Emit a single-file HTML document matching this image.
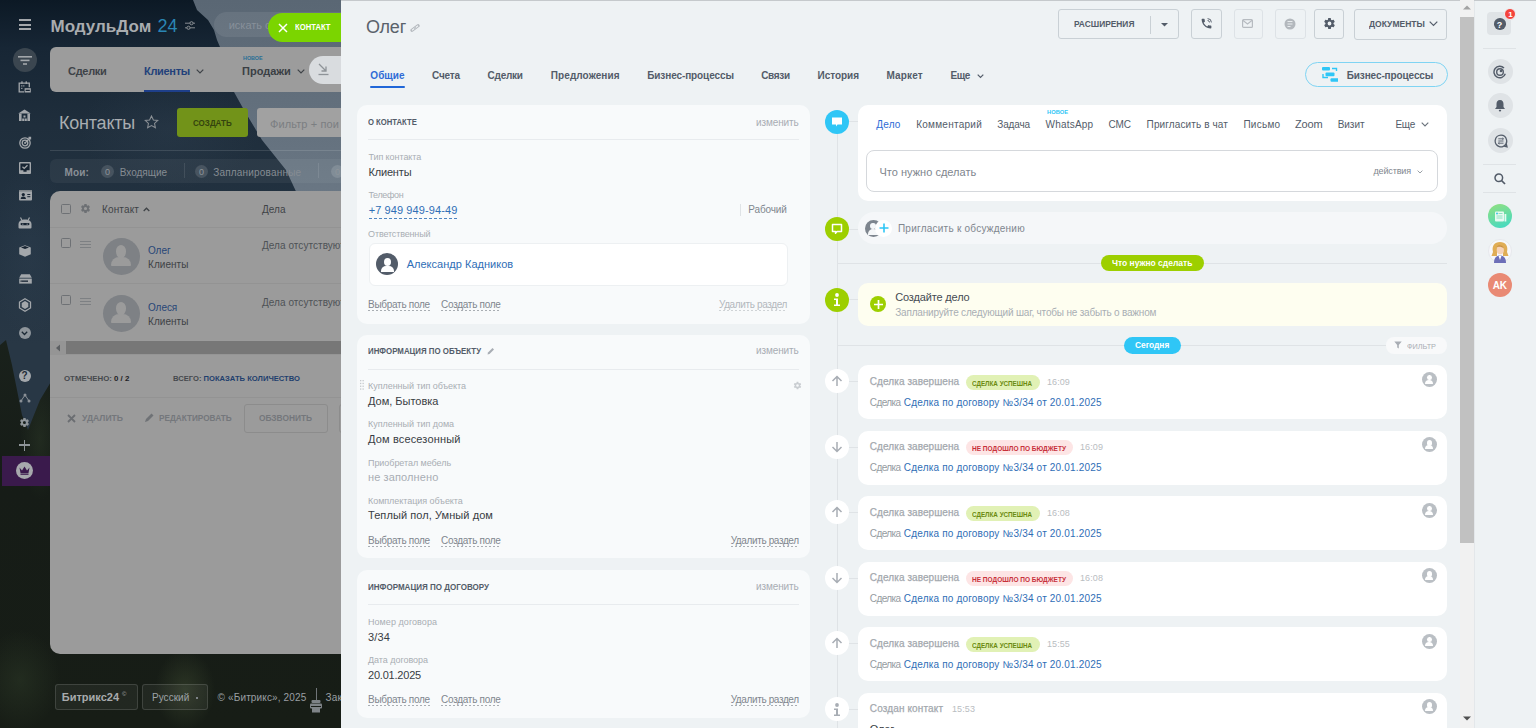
<!DOCTYPE html>
<html><head><meta charset="utf-8">
<style>
*{box-sizing:border-box}
html,body{margin:0;padding:0}
body{width:1536px;height:728px;overflow:hidden;position:relative;font-family:"Liberation Sans",sans-serif;background:#0d1b27}
.a{position:absolute}
.t{position:absolute;white-space:nowrap;line-height:1}
svg{display:block}
#bg{left:0;top:0;width:341px;height:728px;overflow:hidden;background:#0f1d29}
#sky{left:0;top:0;width:341px;height:200px;background:linear-gradient(180deg,#5a6774,#6a7784);clip-path:polygon(193px 0,341px 0,341px 200px,300px 200px,286px 170px,270px 150px,262px 140px,244px 110px,234px 92px,220px 47px,217px 40px,214px 30px,208px 20px,197px 10px)}
#mtn{left:0;top:0;width:341px;height:480px;background:radial-gradient(ellipse 90px 60px at 170px 130px,rgba(80,100,120,0.12),rgba(0,0,0,0)),radial-gradient(ellipse 40px 90px at 30px 250px,rgba(80,100,120,0.1),rgba(0,0,0,0)),linear-gradient(180deg,#0c1925 0%,#172635 10%,#1f2e3c 26%,#233342 50%,#283745 72%,#283745 100%)}
#forest{left:0;top:320px;width:341px;height:408px;background:radial-gradient(ellipse 30px 40px at 185px 370px,rgba(60,72,48,0.55),rgba(0,0,0,0)),radial-gradient(ellipse 40px 50px at 20px 360px,rgba(45,58,40,0.5),rgba(0,0,0,0)),radial-gradient(ellipse 20px 60px at 40px 120px,rgba(45,58,40,0.45),rgba(0,0,0,0)),linear-gradient(180deg,#1a221c 0%,#161c17 40%,#171d16 100%);clip-path:polygon(0 25px,6px 20px,12px 45px,17px 70px,22px 95px,28px 110px,34px 95px,40px 80px,46px 70px,52px 60px,341px 60px,341px 408px,0 408px)}
.dl{border-bottom:1px dashed #b9bdc2}
</style></head><body>
<div id="bg" class="a">
  <div id="mtn" class="a"></div>
  <div id="sky" class="a"></div>
  <div id="forest" class="a"></div>
</div>

<!-- LEFT SIDEBAR -->
<div class="a" style="left:0;top:0;width:50px;height:728px">
  <!-- hamburger -->
  <div class="a" style="left:19px;top:19px;width:12px;height:2px;background:#a3a7ab"></div>
  <div class="a" style="left:19px;top:23.5px;width:12px;height:2px;background:#a3a7ab"></div>
  <div class="a" style="left:19px;top:28px;width:12px;height:2px;background:#a3a7ab"></div>
  <!-- filter circle -->
  <div class="a" style="left:13px;top:48px;width:24px;height:24px;border-radius:50%;background:#3b4650"></div>
  <svg class="a" style="left:18px;top:56px" width="14" height="10" viewBox="0 0 14 10"><rect x="0" y="0" width="14" height="1.6" fill="#a3a7ab"/><rect x="2.5" y="3.6" width="9" height="1.6" fill="#a3a7ab"/><rect x="5" y="7.2" width="4" height="1.6" fill="#a3a7ab"/></svg>
  <!-- calendar -->
  <svg class="a" style="left:18px;top:81px" width="13" height="12" viewBox="0 0 13 12"><path d="M6 10.9H1.2V2.1H11.3V6.3" fill="none" stroke="#a3a7ab" stroke-width="1.3"/><rect x="3.3" y="0.3" width="1.3" height="2.6" fill="#a3a7ab"/><rect x="7.6" y="0.3" width="1.3" height="2.6" fill="#a3a7ab"/><rect x="3.2" y="4.3" width="1.2" height="1.2" fill="#a3a7ab"/><rect x="3.2" y="6.8" width="1.2" height="1.2" fill="#a3a7ab"/><rect x="5.2" y="4.3" width="1.2" height="1.2" fill="#a3a7ab"/><rect x="6.6" y="7.2" width="6.2" height="4.3" fill="#a3a7ab"/><rect x="7.6" y="8.7" width="4.2" height="1.3" fill="#172432"/></svg>
  <!-- house -->
  <svg class="a" style="left:18px;top:108.5px" width="13" height="12" viewBox="0 0 13 12"><path d="M0.2 4.6L6.5 0.6L12.8 4.6Z" fill="#a3a7ab"/><rect x="1" y="4.5" width="2.6" height="7.5" fill="#a3a7ab"/><rect x="9.4" y="4.5" width="2.6" height="7.5" fill="#a3a7ab"/><rect x="5.5" y="6.5" width="2" height="2" fill="#a3a7ab"/><rect x="4.2" y="9.5" width="2.1" height="2.5" fill="#a3a7ab"/><rect x="6.7" y="9.5" width="2.1" height="2.5" fill="#a3a7ab"/></svg>
  <!-- target -->
  <svg class="a" style="left:18.5px;top:136px" width="13" height="13" viewBox="0 0 13 13"><circle cx="6" cy="7" r="5.2" fill="none" stroke="#a3a7ab" stroke-width="1.3"/><circle cx="6" cy="7" r="2.8" fill="none" stroke="#a3a7ab" stroke-width="1.3"/><circle cx="6" cy="7" r="0.9" fill="#a3a7ab"/><path d="M6 7L11.5 1.5M9.5 1.5h2v2" stroke="#a3a7ab" stroke-width="1.3" fill="none"/></svg>
  <!-- checkbox -->
  <svg class="a" style="left:19px;top:162px" width="12" height="12" viewBox="0 0 12 12"><rect x="0" y="0" width="12" height="12" rx="1" fill="#a3a7ab"/><path d="M1.4 1.4H10.6V8.3H7.6V9.8H4.4V8.3H1.4Z" fill="#172432"/><path d="M3.5 4.8L5.2 6.4L8.5 3.2" stroke="#a3a7ab" stroke-width="1.3" fill="none"/></svg>
  <!-- contact card -->
  <svg class="a" style="left:18.5px;top:190px" width="13" height="11" viewBox="0 0 13 11"><rect x="0" y="0" width="13" height="10.5" rx="1" fill="#a3a7ab"/><rect x="0" y="0" width="13" height="1.6" fill="#7d8388"/><circle cx="4.3" cy="4.6" r="1.6" fill="#172432"/><path d="M1.6 9c0.2-1.9 1.3-2.6 2.7-2.6s2.5 0.7 2.7 2.6z" fill="#172432"/><rect x="8.3" y="4" width="3" height="1" fill="#172432"/><rect x="8.3" y="6.2" width="3" height="1" fill="#172432"/></svg>
  <!-- robot -->
  <svg class="a" style="left:18px;top:216.5px" width="14" height="12" viewBox="0 0 14 12"><path d="M2.5 0.5L3.8 3M11.5 0.5L10.2 3" stroke="#a3a7ab" stroke-width="1.2"/><path d="M0.5 7.5C0.5 4 3 2.5 7 2.5S13.5 4 13.5 7.5V10.5Q13.5 11.5 12.5 11.5H1.5Q0.5 11.5 0.5 10.5Z" fill="#a3a7ab"/><rect x="2.5" y="6" width="9" height="2.2" rx="1.1" fill="#172432"/><rect x="4.2" y="6.7" width="1.2" height="0.9" fill="#a3a7ab"/><rect x="8.6" y="6.7" width="1.2" height="0.9" fill="#a3a7ab"/></svg>
  <!-- box -->
  <svg class="a" style="left:19px;top:245px" width="12" height="12" viewBox="0 0 12 12"><path d="M6 0.2L11.8 2.5V9.3L6 11.8L0.2 9.3V2.5Z" fill="#a3a7ab"/><path d="M2 2.4L6 1L10 2.4L6 3.9Z" fill="#172432"/></svg>
  <!-- drawer -->
  <svg class="a" style="left:18.5px;top:273.5px" width="13" height="10" viewBox="0 0 13 10"><path d="M2.2 0.3H10.8L12.8 3.8H0.2Z" fill="#a3a7ab"/><rect x="0.2" y="4.6" width="12.6" height="5" fill="#a3a7ab"/><rect x="2.5" y="6.5" width="6.5" height="1.3" fill="#172432"/><rect x="1.5" y="6.5" width="1" height="1.3" fill="#172432"/></svg>
  <!-- hexagon -->
  <svg class="a" style="left:18px;top:298px" width="14" height="14" viewBox="0 0 14 14"><path d="M7 0.8L12.5 4V10L7 13.2L1.5 10V4Z" fill="none" stroke="#a3a7ab" stroke-width="1.3"/><path d="M7 3L10.3 5V9L7 11L3.7 9V5Z" fill="#a3a7ab"/></svg>
  <!-- chevron circle -->
  <div class="a" style="left:18.5px;top:327px;width:12px;height:12px;border-radius:50%;background:#8e959b"></div>
  <svg class="a" style="left:21px;top:331px" width="7" height="5" viewBox="0 0 7 5"><path d="M0.8 0.8L3.5 3.5L6.2 0.8" stroke="#1a2834" stroke-width="1.3" fill="none"/></svg>
  <!-- help -->
  <div class="a" style="left:18.5px;top:369.5px;width:12px;height:12px;border-radius:50%;background:#a3a7ab"></div>
  <div class="t" style="left:21px;top:371px;width:7px;text-align:center;font-size:10px;font-weight:bold;color:#1e2b36">?</div>
  <!-- network -->
  <svg class="a" style="left:19px;top:393px" width="12" height="10" viewBox="0 0 12 10"><circle cx="6" cy="2" r="1.5" fill="#8a9096"/><circle cx="2" cy="8" r="1.5" fill="#8a9096"/><circle cx="10" cy="8" r="1.5" fill="#8a9096"/><path d="M6 2L2 8M6 2L10 8" stroke="#8a9096" stroke-width="1"/></svg>
  <!-- gear -->
  <svg class="a" style="left:19px;top:417px" width="11" height="11" viewBox="0 0 24 24"><path fill="#8f9599" d="M19.4 13c.04-.3.06-.66.06-1s-.02-.7-.07-1l2.1-1.65a.5.5 0 0 0 .12-.64l-2-3.46a.5.5 0 0 0-.6-.22l-2.5 1a7.3 7.3 0 0 0-1.7-1l-.38-2.65A.5.5 0 0 0 14 2h-4a.5.5 0 0 0-.5.42l-.37 2.65c-.6.25-1.17.6-1.7 1l-2.5-1a.5.5 0 0 0-.6.22l-2 3.46a.5.5 0 0 0 .12.64L4.57 11c-.04.3-.07.66-.07 1s.02.7.07 1l-2.1 1.65a.5.5 0 0 0-.12.64l2 3.46c.12.22.39.3.6.22l2.5-1c.52.4 1.1.74 1.7 1l.37 2.65c.04.24.25.42.5.42h4c.25 0 .46-.18.5-.42l.37-2.65c.6-.25 1.17-.6 1.7-1l2.5 1c.22.08.48 0 .6-.22l2-3.46a.5.5 0 0 0-.12-.64zM12 15.5A3.5 3.5 0 1 1 12 8.5a3.5 3.5 0 0 1 0 7z"/></svg>
  <!-- plus -->
  <div class="a" style="left:19px;top:444px;width:11px;height:1.6px;background:#8f9599"></div>
  <div class="a" style="left:23.7px;top:439.5px;width:1.6px;height:11px;background:#8f9599"></div>
  <!-- crown -->
  <div class="a" style="left:2px;top:456px;width:48px;height:30px;background:#3a1a4c"></div>
  <div class="a" style="left:15.5px;top:462px;width:17px;height:17px;border-radius:50%;background:#a7a9ad"></div>
  <svg class="a" style="left:18.5px;top:466px" width="11" height="9" viewBox="0 0 11 9"><path d="M0.5 1.5L3 4.5L5.5 0.5L8 4.5L10.5 1.5L9.5 7H1.5Z" fill="#3a1a4c"/><rect x="1.5" y="7.5" width="8" height="1.3" fill="#3a1a4c"/></svg>
</div>



<div class="t" style="left:50.5px;top:17.81px;font-size:17px;color:#a9acaf;font-weight:bold;">МодульДом</div>
<div class="t" style="left:157.5px;top:16.96px;font-size:18px;color:#2a86b4;letter-spacing:-0.111px;">24</div>
<svg class="a" style="left:185px;top:20.5px;" width="10" height="9" viewBox="0 0 10 9"><path d="M0 2.2h10M0 6.8h10" stroke="#878c91" stroke-width="1"/><circle cx="6.5" cy="2.2" r="1.6" fill="#1d2b37" stroke="#878c91" stroke-width="1"/><circle cx="3.5" cy="6.8" r="1.6" fill="#1d2b37" stroke="#878c91" stroke-width="1"/></svg>
<div class="a" style="left:214px;top:11.5px;width:140px;height:25px;border-radius:13px;background:rgba(255,255,255,0.08)"></div>
<div class="t" style="left:228.7px;top:19.99px;font-size:11px;color:#87909a;">искать с</div>
<div class="a" style="left:50px;top:47px;width:320px;height:45px;border-radius:6px;background:#9c9c9c"></div>
<div class="t" style="left:68px;top:66.49px;font-size:11px;color:#3e4348;font-weight:bold;letter-spacing:-0.305px;">Сделки</div>
<div class="t" style="left:144px;top:66.49px;font-size:11px;color:#22417a;font-weight:bold;letter-spacing:-0.312px;">Клиенты</div>
<svg class="a" style="left:196px;top:69px;" width="8" height="5" viewBox="0 0 8 5"><path d="M0.7 0.7L4 4L7.3 0.7" stroke="#3e4348" stroke-width="1.2" fill="none"/></svg>
<div class="a" style="left:144px;top:90px;width:46px;height:2px;background:#1e3f8a"></div>
<div class="t" style="left:242.8px;top:55.22px;font-size:6px;color:#2a6f96;font-weight:bold;"><span style="display:inline-block;transform:scale(0.9);transform-origin:0 100%">НОВОЕ</span></div>
<div class="t" style="left:242px;top:66.49px;font-size:11px;color:#3a3f44;font-weight:bold;">Продажи</div>
<svg class="a" style="left:297px;top:69px;" width="8" height="5" viewBox="0 0 8 5"><path d="M0.7 0.7L4 4L7.3 0.7" stroke="#3e4348" stroke-width="1.2" fill="none"/></svg>
<div class="a" style="left:309px;top:56px;width:60px;height:28px;border-radius:14px;background:#d9dcdf"></div>
<svg class="a" style="left:318px;top:63px;" width="11" height="13" viewBox="0 0 11 13"><path d="M1 1L8 8M8 3.5V8H3.5" stroke="#8e9398" stroke-width="1.3" fill="none"/><path d="M0.5 11.5h10" stroke="#8e9398" stroke-width="1.3"/></svg>
<div class="t" style="left:59px;top:113.86px;font-size:18px;color:#a9adb1;letter-spacing:-0.216px;">Контакты</div>
<svg class="a" style="left:143.5px;top:115px;" width="15" height="14" viewBox="0 0 24 23"><path d="M12 1.5l3.1 6.6 7.2.9-5.3 4.9 1.4 7.1L12 17.5l-6.4 3.5 1.4-7.1-5.3-4.9 7.2-.9z" fill="none" stroke="#8b9095" stroke-width="1.7"/></svg>
<div class="a" style="left:177px;top:107.5px;width:71px;height:29.5px;border-radius:3px;background:#729319"></div>
<div class="t" style="left:193px;top:119.48px;font-size:9px;color:#34430e;font-weight:bold;transform:scaleX(0.8922);transform-origin:0 0;">СОЗДАТЬ</div>
<div class="a" style="left:257px;top:107.5px;width:120px;height:29.5px;border-radius:3px;background:#a1a1a1"></div>
<div class="t" style="left:270px;top:118.79px;font-size:11px;color:#7b7e81;letter-spacing:0.103px;">Фильтр + пои</div>
<div class="a" style="left:50px;top:150px;width:300px;height:1px;background:rgba(255,255,255,0.12)"></div>
<div class="a" style="left:50px;top:158.8px;width:300px;height:24.2px;border-radius:6px 0 0 6px;background:rgba(255,255,255,0.05)"></div>
<div class="t" style="left:64.6px;top:167.64px;font-size:10px;color:#8a9097;font-weight:bold;letter-spacing:0.120px;">Мои:</div>
<div class="a" style="left:101px;top:164.5px;width:13px;height:13px;border-radius:50%;background:rgba(255,255,255,0.13)"></div>
<div class="t" style="left:101px;top:167.68px;font-size:9px;color:#8e959b;width:13px;text-align:center">0</div>
<div class="t" style="left:119.7px;top:167.64px;font-size:10px;color:#868c93;">Входящие</div>
<div class="a" style="left:184px;top:163px;width:1px;height:15px;background:rgba(255,255,255,0.1)"></div>
<div class="a" style="left:195px;top:164.5px;width:13px;height:13px;border-radius:50%;background:rgba(255,255,255,0.13)"></div>
<div class="t" style="left:195px;top:167.68px;font-size:9px;color:#8e959b;width:13px;text-align:center">0</div>
<div class="t" style="left:213.2px;top:167.64px;font-size:10px;color:#868c93;letter-spacing:0.199px;">Запланированные</div>
<div class="a" style="left:318px;top:163px;width:1px;height:15px;background:rgba(255,255,255,0.1)"></div>
<div class="a" style="left:331px;top:164.5px;width:13px;height:13px;border-radius:50%;background:rgba(255,255,255,0.13)"></div>
<div class="t" style="left:331px;top:167.68px;font-size:9px;color:#8e959b;width:13px;text-align:center">0</div>
<div class="a" style="left:50px;top:190.8px;width:320px;height:463.4px;border-radius:10px;background:#9b9b9b;overflow:hidden"><div class="a" style="left:0;top:36px;width:320px;height:1px;background:#939393"></div><div class="a" style="left:0;top:92px;width:320px;height:1px;background:#939393"></div><div class="a" style="left:0;top:206px;width:320px;height:1px;background:#939393"></div></div>
<div class="a" style="left:60.5px;top:203.5px;width:10.5px;height:10.5px;border:1px solid #6e7175;border-radius:1.5px"></div>
<svg class="a" style="left:79.5px;top:202.5px;" width="11" height="11" viewBox="0 0 24 24"><path fill="#6d7074" d="M19.4 13c.04-.3.06-.66.06-1s-.02-.7-.07-1l2.1-1.65a.5.5 0 0 0 .12-.64l-2-3.46a.5.5 0 0 0-.6-.22l-2.5 1a7.3 7.3 0 0 0-1.7-1l-.38-2.65A.5.5 0 0 0 14 2h-4a.5.5 0 0 0-.5.42l-.37 2.65c-.6.25-1.17.6-1.7 1l-2.5-1a.5.5 0 0 0-.6.22l-2 3.46a.5.5 0 0 0 .12.64L4.57 11c-.04.3-.07.66-.07 1s.02.7.07 1l-2.1 1.65a.5.5 0 0 0-.12.64l2 3.46c.12.22.39.3.6.22l2.5-1c.52.4 1.1.74 1.7 1l.37 2.65c.04.24.25.42.5.42h4c.25 0 .46-.18.5-.42l.37-2.65c.6-.25 1.17-.6 1.7-1l2.5 1c.22.08.48 0 .6-.22l2-3.46a.5.5 0 0 0-.12-.64zM12 15.5A3.5 3.5 0 1 1 12 8.5a3.5 3.5 0 0 1 0 7z"/></svg>
<div class="t" style="left:102px;top:204.94px;font-size:10px;color:#3f4347;letter-spacing:0.139px;">Контакт</div>
<svg class="a" style="left:143px;top:207px;" width="7" height="5" viewBox="0 0 7 5"><path d="M0.7 4L3.5 1.2L6.3 4" stroke="#3f4347" stroke-width="1.3" fill="none"/></svg>
<div class="t" style="left:262px;top:204.94px;font-size:10px;color:#3f4347;letter-spacing:0.047px;">Дела</div>
<div class="a" style="left:60.5px;top:237.5px;width:10.5px;height:10.5px;border:1px solid #6e7175;border-radius:1.5px"></div>
<div class="a" style="left:80px;top:241px;width:11px;height:1.2px;background:#7d8083;box-shadow:0 3px 0 #7d8083,0 6px 0 #7d8083"></div>
<div class="a" style="left:102.5px;top:237.5px;width:37.5px;height:37.5px;border-radius:50%;background:#7e8185;overflow:hidden"><div class="a" style="left:13.7px;top:7.5px;width:10px;height:12.5px;border-radius:50%;background:#9b9b9b"></div><div class="a" style="left:8.7px;top:19.3px;width:20px;height:9.3px;border-radius:9px 9px 1px 1px;background:#9b9b9b"></div></div>
<div class="t" style="left:148px;top:245.84px;font-size:10px;color:#274677;letter-spacing:-0.057px;">Олег</div>
<div class="t" style="left:148px;top:259.74px;font-size:10px;color:#3e4246;letter-spacing:0.057px;">Клиенты</div>
<div class="t" style="left:262px;top:241.03px;font-size:10px;color:#4e5256;letter-spacing:0.051px;">Дела отсутствуют</div>
<div class="a" style="left:60.5px;top:294.5px;width:10.5px;height:10.5px;border:1px solid #6e7175;border-radius:1.5px"></div>
<div class="a" style="left:80px;top:298px;width:11px;height:1.2px;background:#7d8083;box-shadow:0 3px 0 #7d8083,0 6px 0 #7d8083"></div>
<div class="a" style="left:102.5px;top:294.5px;width:37.5px;height:37.5px;border-radius:50%;background:#7e8185;overflow:hidden"><div class="a" style="left:13.7px;top:7.5px;width:10px;height:12.5px;border-radius:50%;background:#9b9b9b"></div><div class="a" style="left:8.7px;top:19.3px;width:20px;height:9.3px;border-radius:9px 9px 1px 1px;background:#9b9b9b"></div></div>
<div class="t" style="left:148px;top:302.84px;font-size:10px;color:#274677;letter-spacing:-0.059px;">Олеся</div>
<div class="t" style="left:148px;top:316.74px;font-size:10px;color:#3e4246;letter-spacing:0.057px;">Клиенты</div>
<div class="t" style="left:262px;top:298.04px;font-size:10px;color:#4e5256;letter-spacing:0.051px;">Дела отсутствуют</div>
<div class="a" style="left:50px;top:340.5px;width:291px;height:14px;background:#959595"></div>
<svg class="a" style="left:55px;top:343.5px;" width="6" height="8" viewBox="0 0 6 8"><path d="M5 0.5V7.5L1 4Z" fill="#5c5f62"/></svg>
<div class="a" style="left:66px;top:341px;width:275px;height:13px;background:#777777"></div>
<div class="t" style="left:64px;top:374.55px;font-size:7.86px;color:#45494d;font-weight:bold;">ОТМЕЧЕНО: <span style="color:#1f2225">0 / 2</span></div>
<div class="t" style="left:173px;top:374.76px;font-size:7.61px;color:#45494d;font-weight:bold;">ВСЕГО: <span style="color:#1f3f6e">ПОКАЗАТЬ КОЛИЧЕСТВО</span></div>
<svg class="a" style="left:67px;top:413.5px;" width="9" height="9" viewBox="0 0 9 9"><path d="M1 1L8 8M8 1L1 8" stroke="#6b6e72" stroke-width="1.8"/></svg>
<div class="t" style="left:82.4px;top:414.28px;font-size:9px;color:#74777b;font-weight:bold;transform:scaleX(0.9556);transform-origin:0 0;">УДАЛИТЬ</div>
<svg class="a" style="left:144px;top:412.5px;" width="10" height="10" viewBox="0 0 10 10"><path d="M1 9L2 6L7.5 0.5L9.5 2.5L4 8Z" fill="#6f7276"/></svg>
<div class="t" style="left:158.7px;top:414.28px;font-size:9px;color:#74777b;font-weight:bold;transform:scaleX(0.9122);transform-origin:0 0;">РЕДАКТИРОВАТЬ</div>
<div class="a" style="left:243.5px;top:403.5px;width:84px;height:29px;border:1px solid #8c8c8c;border-radius:3px"></div>
<div class="t" style="left:259px;top:414.28px;font-size:9px;color:#74777b;font-weight:bold;transform:scaleX(0.9267);transform-origin:0 0;">ОБЗВОНИТЬ</div>
<div class="a" style="left:338.5px;top:403.5px;width:20px;height:29px;border:1px solid #8c8c8c;border-radius:3px"></div>
<div class="a" style="left:54.5px;top:684px;width:83.5px;height:25.5px;border:1px solid rgba(255,255,255,0.13);border-radius:3px;background:rgba(255,255,255,0.05)"></div>
<div class="t" style="left:61.8px;top:692.49px;font-size:11px;color:#a8abad;font-weight:bold;letter-spacing:0.173px;letter-spacing:0">Битрикс24</div>
<div class="t" style="left:122px;top:690.72px;font-size:6px;color:#a8abad;">©</div>
<div class="a" style="left:142px;top:684px;width:65.5px;height:25.5px;border:1px solid rgba(255,255,255,0.13);border-radius:3px;background:rgba(255,255,255,0.05)"></div>
<div class="t" style="left:152px;top:693.33px;font-size:10px;color:#9ea3a7;letter-spacing:0.027px;">Русский</div>
<div class="a" style="left:196px;top:697px;width:1.5px;height:1.5px;background:#7e8387"></div>
<div class="t" style="left:217.6px;top:693.33px;font-size:10px;color:#9a9fa3;letter-spacing:0.137px;">© «Битрикс», 2025</div>
<div class="a" style="left:315.5px;top:688px;width:1px;height:12px;background:#6f7478"></div>
<svg class="a" style="left:310px;top:700px;" width="12" height="13" viewBox="0 0 12 13"><rect x="1.5" y="0" width="9" height="3" rx="1" fill="#7e8387"/><rect x="0" y="3.5" width="12" height="5" rx="1" fill="#7e8387"/><rect x="2" y="8" width="8" height="4.5" fill="#7e8387"/><rect x="1" y="6" width="10" height="1" fill="#1a1f1a"/></svg>
<div class="t" style="left:325.6px;top:693.33px;font-size:10px;color:#9a9fa3;letter-spacing:0.144px;">Зак</div>
<div class="a" style="left:268px;top:13px;width:80px;height:29px;border-radius:15px 0 0 15px;background:#7bd500"></div>
<svg class="a" style="left:278px;top:22.5px;" width="10" height="10" viewBox="0 0 10 10"><path d="M1 1L9 9M9 1L1 9" stroke="#fff" stroke-width="1.5"/></svg>
<div class="t" style="left:294.7px;top:23.08px;font-size:9px;color:#fff;font-weight:bold;transform:scaleX(0.8522);transform-origin:0 0;">КОНТАКТ</div>
<div class="a" style="left:341px;top:0px;width:1134px;height:728px;background:#eef2f4"></div>
<div class="a" style="left:341px;top:0px;width:1195px;height:1px;background:#c5c9cc"></div>
<div class="t" style="left:366px;top:17.86px;font-size:18px;color:#5a626b;letter-spacing:-0.227px;">Олег</div>
<svg class="a" style="left:409.5px;top:23.5px;" width="10" height="8" viewBox="0 0 10 8"><path d="M2 6.2L8 1.8" stroke="#b3b8bd" stroke-width="3.2" stroke-linecap="round"/><path d="M2.3 6L7.7 2" stroke="#eef2f4" stroke-width="1.2" stroke-linecap="round"/><path d="M4.3 4.6L5.7 3.4" stroke="#b3b8bd" stroke-width="1.2"/></svg>
<div class="t" style="left:370.3px;top:71.33px;font-size:10px;color:#2e6bd6;font-weight:bold;letter-spacing:0.061px;">Общие</div>
<div class="t" style="left:432px;top:71.33px;font-size:10px;color:#535c69;font-weight:bold;letter-spacing:-0.161px;">Счета</div>
<div class="t" style="left:487.6px;top:71.33px;font-size:10px;color:#535c69;font-weight:bold;letter-spacing:-0.256px;">Сделки</div>
<div class="t" style="left:550.8px;top:71.33px;font-size:10px;color:#535c69;font-weight:bold;letter-spacing:0.074px;">Предложения</div>
<div class="t" style="left:647.2px;top:71.33px;font-size:10px;color:#535c69;font-weight:bold;letter-spacing:-0.100px;">Бизнес-процессы</div>
<div class="t" style="left:761.2px;top:71.33px;font-size:10px;color:#535c69;font-weight:bold;letter-spacing:-0.302px;">Связи</div>
<div class="t" style="left:817.5px;top:71.33px;font-size:10px;color:#535c69;font-weight:bold;letter-spacing:-0.030px;">История</div>
<div class="t" style="left:886.4px;top:71.33px;font-size:10px;color:#535c69;font-weight:bold;letter-spacing:0.154px;">Маркет</div>
<div class="t" style="left:950.4px;top:71.33px;font-size:10px;color:#535c69;font-weight:bold;letter-spacing:-0.393px;">Еще</div>
<div class="a" style="left:370.3px;top:86.3px;width:34.4px;height:2px;background:#2067d8;border-radius:1px"></div>
<svg class="a" style="left:976.5px;top:73.5px;" width="7" height="5" viewBox="0 0 7 5"><path d="M0.7 0.7L3.5 3.5L6.3 0.7" stroke="#535c69" stroke-width="1.2" fill="none"/></svg>
<div class="a" style="left:1058px;top:9px;width:121px;height:30px;border:1px solid #c9d0d5;border-radius:3px"></div>
<div class="t" style="left:1074px;top:20.48px;font-size:9px;color:#535c69;font-weight:bold;transform:scaleX(0.9300);transform-origin:0 0;">РАСШИРЕНИЯ</div>
<div class="a" style="left:1149.5px;top:15.5px;width:1px;height:18px;background:#c9d0d5"></div>
<svg class="a" style="left:1160.5px;top:22.5px;" width="7" height="4" viewBox="0 0 7 4"><path d="M0 0H7L3.5 3.5Z" fill="#535c69"/></svg>
<div class="a" style="left:1191.3px;top:9px;width:30.3px;height:30px;border:1px solid #c9d0d5;border-radius:3px"></div>
<svg class="a" style="left:1200px;top:17px;" width="13" height="13" viewBox="0 0 24 24"><path fill="#535c69" d="M6.6 10.8c1.4 2.8 3.8 5.1 6.6 6.6l2.2-2.2c.3-.3.7-.4 1-.2 1.1.4 2.3.6 3.6.6.6 0 1 .4 1 1V20c0 .6-.4 1-1 1C10.6 21 3 13.4 3 4c0-.6.4-1 1-1h3.5c.6 0 1 .4 1 1 0 1.3.2 2.5.6 3.6.1.3 0 .7-.2 1z"/><path d="M14 3a7 7 0 0 1 7 7M14 6.5a3.5 3.5 0 0 1 3.5 3.5" stroke="#535c69" stroke-width="1.8" fill="none"/></svg>
<div class="a" style="left:1233.7px;top:9px;width:29.5px;height:30px;border:1px solid #dde2e6;border-radius:3px"></div>
<svg class="a" style="left:1242px;top:19px;" width="11" height="9" viewBox="0 0 11 9"><rect x="0.6" y="0.6" width="9.8" height="7.8" rx="1" fill="none" stroke="#b6bbc0" stroke-width="1.2"/><path d="M0.8 1.2L5.5 5L10.2 1.2" fill="none" stroke="#b6bbc0" stroke-width="1.1"/></svg>
<div class="a" style="left:1275.4px;top:9px;width:30.2px;height:30px;border:1px solid #dde2e6;border-radius:3px"></div>
<svg class="a" style="left:1284px;top:18px;" width="12" height="12" viewBox="0 0 12 12"><circle cx="6" cy="6" r="5.5" fill="#b3b8bd"/><path d="M3.5 3.5h5M3.5 6h5M3.5 8.5h3" stroke="#eef2f4" stroke-width="0.9"/></svg>
<div class="a" style="left:1314.3px;top:9px;width:29.5px;height:30px;border:1px solid #c9d0d5;border-radius:3px"></div>
<svg class="a" style="left:1322.5px;top:17px;" width="13" height="13" viewBox="0 0 24 24"><path fill="#535c69" d="M19.4 13c.04-.3.06-.66.06-1s-.02-.7-.07-1l2.1-1.65a.5.5 0 0 0 .12-.64l-2-3.46a.5.5 0 0 0-.6-.22l-2.5 1a7.3 7.3 0 0 0-1.7-1l-.38-2.65A.5.5 0 0 0 14 2h-4a.5.5 0 0 0-.5.42l-.37 2.65c-.6.25-1.17.6-1.7 1l-2.5-1a.5.5 0 0 0-.6.22l-2 3.46a.5.5 0 0 0 .12.64L4.57 11c-.04.3-.07.66-.07 1s.02.7.07 1l-2.1 1.65a.5.5 0 0 0-.12.64l2 3.46c.12.22.39.3.6.22l2.5-1c.52.4 1.1.74 1.7 1l.37 2.65c.04.24.25.42.5.42h4c.25 0 .46-.18.5-.42l.37-2.65c.6-.25 1.17-.6 1.7-1l2.5 1c.22.08.48 0 .6-.22l2-3.46a.5.5 0 0 0-.12-.64zM12 15.5A3.5 3.5 0 1 1 12 8.5a3.5 3.5 0 0 1 0 7z"/></svg>
<div class="a" style="left:1353.5px;top:9px;width:93.3px;height:30.5px;border:1px solid #c9d0d5;border-radius:3px"></div>
<div class="t" style="left:1368.5px;top:20.48px;font-size:9px;color:#535c69;font-weight:bold;transform:scaleX(0.9467);transform-origin:0 0;">ДОКУМЕНТЫ</div>
<svg class="a" style="left:1429px;top:21px;" width="9" height="6" viewBox="0 0 9 6"><path d="M0.7 0.7L4.5 4.5L8.3 0.7" stroke="#535c69" stroke-width="1.2" fill="none"/></svg>
<div class="a" style="left:1304.7px;top:62px;width:143px;height:24.7px;border:1.6px solid #7fd4f3;border-radius:13px"></div>
<svg class="a" style="left:1321.5px;top:67px;" width="16.5" height="15" viewBox="0 0 16.5 15"><rect x="0" y="0" width="8" height="3.6" rx="1" fill="#2fc6f6"/><rect x="3.5" y="5.6" width="9" height="3.6" rx="1" fill="#2fc6f6"/><rect x="8.5" y="11.2" width="8" height="3.6" rx="1" fill="#2fc6f6"/><path d="M10 1.5h4.5v2.5M1 7v3.5h5" stroke="#2fc6f6" stroke-width="1.4" fill="none"/></svg>
<div class="t" style="left:1346.7px;top:71.33px;font-size:10px;color:#535c69;font-weight:bold;letter-spacing:-0.106px;">Бизнес-процессы</div>
<div class="a" style="left:357px;top:105px;width:453px;height:218.5px;border-radius:10px;background:#f8fafb"></div>
<div class="t" style="left:367.8px;top:118.18px;font-size:9px;color:#535c69;font-weight:bold;transform:scaleX(0.8544);transform-origin:0 0;">О КОНТАКТЕ</div>
<div class="t" style="right:737.3px;top:117.63px;font-size:10px;color:#a8adb4;letter-spacing:-0.087px;">изменить</div>
<div class="a" style="left:368px;top:139px;width:431px;height:1px;background:#e8ebee"></div>
<div class="t" style="left:368.4px;top:153.18px;font-size:9px;color:#a9aeb4;letter-spacing:-0.069px;">Тип контакта</div>
<div class="t" style="left:368.4px;top:167.09px;font-size:11px;color:#383d44;letter-spacing:-0.160px;">Клиенты</div>
<div class="t" style="left:368.4px;top:190.68px;font-size:9px;color:#a9aeb4;letter-spacing:-0.332px;">Телефон</div>
<div class="t" style="left:368.7px;top:205.29px;font-size:11px;color:#2f6eb6;letter-spacing:0.094px;border-bottom:1px dashed #4f86c2;padding-bottom:0.5px;line-height:1.08">+7 949 949-94-49</div>
<div class="a" style="left:740px;top:204px;width:1px;height:12px;background:#dfe3e6"></div>
<div class="t" style="left:748.3px;top:205.34px;font-size:10px;color:#80868e;letter-spacing:-0.124px;">Рабочий</div>
<div class="t" style="left:368.1px;top:230.18px;font-size:9px;color:#a9aeb4;letter-spacing:-0.154px;">Ответственный</div>
<div class="a" style="left:368.5px;top:243.3px;width:419px;height:42.7px;border:1px solid #edf0f2;border-radius:6px;background:#fff"></div>
<div class="a" style="left:376px;top:253px;width:22.4px;height:22.4px;border-radius:50%;background:#535c69;overflow:hidden"><div class="a" style="left:7.7px;top:5px;width:7px;height:8px;border-radius:50%;background:#fff"></div><div class="a" style="left:4.7px;top:12.5px;width:13px;height:6.5px;border-radius:5px 5px 0 0;background:#fff"></div></div>
<div class="t" style="left:406.7px;top:259.29px;font-size:11px;color:#2f6eb6;letter-spacing:0.021px;">Александр Кадников</div>
<div class="t" style="left:368.1px;top:300.04px;font-size:10px;color:#80868e;letter-spacing:-0.293px;background:linear-gradient(90deg,#a9aeb3 50%,rgba(0,0,0,0) 50%) 0 100%/4px 1px repeat-x;padding-bottom:1px">Выбрать поле</div>
<div class="t" style="left:441.1px;top:300.04px;font-size:10px;color:#80868e;letter-spacing:-0.288px;background:linear-gradient(90deg,#a9aeb3 50%,rgba(0,0,0,0) 50%) 0 100%/4px 1px repeat-x;padding-bottom:1px">Создать поле</div>
<div class="t" style="right:749px;top:300.04px;font-size:10px;color:#b3b8bd;letter-spacing:-0.371px;background:linear-gradient(90deg,#cfd3d6 50%,rgba(0,0,0,0) 50%) 0 100%/4px 1px repeat-x;padding-bottom:1px">Удалить раздел</div>
<div class="a" style="left:357px;top:334.7px;width:453px;height:223.3px;border-radius:10px;background:#f8fafb"></div>
<div class="t" style="left:368px;top:346.88px;font-size:9px;color:#535c69;font-weight:bold;transform:scaleX(0.8744);transform-origin:0 0;">ИНФОРМАЦИЯ ПО ОБЪЕКТУ</div>
<svg class="a" style="left:487px;top:347px;" width="8" height="8" viewBox="0 0 8 8"><path d="M0.5 7.5L1 5.5L5.5 1L7 2.5L2.5 7Z" fill="#a8adb4"/></svg>
<div class="t" style="right:737.3px;top:346.04px;font-size:10px;color:#a8adb4;letter-spacing:-0.087px;">изменить</div>
<div class="a" style="left:368px;top:368.5px;width:431px;height:1px;background:#e8ebee"></div>
<svg class="a" style="left:359.5px;top:380px;" width="4" height="10" viewBox="0 0 4 10"><g fill="#c5c9cd"><rect x="0" y="0" width="1.3" height="1.3"/><rect x="2.5" y="0" width="1.3" height="1.3"/><rect x="0" y="2.8" width="1.3" height="1.3"/><rect x="2.5" y="2.8" width="1.3" height="1.3"/><rect x="0" y="5.6" width="1.3" height="1.3"/><rect x="2.5" y="5.6" width="1.3" height="1.3"/><rect x="0" y="8.4" width="1.3" height="1.3"/><rect x="2.5" y="8.4" width="1.3" height="1.3"/></g></svg>
<svg class="a" style="left:792.5px;top:381px;" width="9" height="9" viewBox="0 0 24 24"><path fill="#c9cdd1" d="M19.4 13c.04-.3.06-.66.06-1s-.02-.7-.07-1l2.1-1.65a.5.5 0 0 0 .12-.64l-2-3.46a.5.5 0 0 0-.6-.22l-2.5 1a7.3 7.3 0 0 0-1.7-1l-.38-2.65A.5.5 0 0 0 14 2h-4a.5.5 0 0 0-.5.42l-.37 2.65c-.6.25-1.17.6-1.7 1l-2.5-1a.5.5 0 0 0-.6.22l-2 3.46a.5.5 0 0 0 .12.64L4.57 11c-.04.3-.07.66-.07 1s.02.7.07 1l-2.1 1.65a.5.5 0 0 0-.12.64l2 3.46c.12.22.39.3.6.22l2.5-1c.52.4 1.1.74 1.7 1l.37 2.65c.04.24.25.42.5.42h4c.25 0 .46-.18.5-.42l.37-2.65c.6-.25 1.17-.6 1.7-1l2.5 1c.22.08.48 0 .6-.22l2-3.46a.5.5 0 0 0-.12-.64zM12 15.5A3.5 3.5 0 1 1 12 8.5a3.5 3.5 0 0 1 0 7z"/></svg>
<div class="t" style="left:368px;top:382.18px;font-size:9px;color:#a9aeb4;letter-spacing:-0.042px;">Купленный тип объекта</div>
<div class="t" style="left:368px;top:395.99px;font-size:11px;color:#383d44;letter-spacing:-0.011px;">Дом, Бытовка</div>
<div class="t" style="left:368px;top:420.48px;font-size:9px;color:#a9aeb4;letter-spacing:-0.043px;">Купленный тип дома</div>
<div class="t" style="left:368px;top:434.29px;font-size:11px;color:#383d44;letter-spacing:0.148px;">Дом всесезонный</div>
<div class="t" style="left:368px;top:458.98px;font-size:9px;color:#a9aeb4;letter-spacing:-0.055px;">Приобретал мебель</div>
<div class="t" style="left:368px;top:471.79px;font-size:11px;color:#a8adb4;letter-spacing:0.110px;">не заполнено</div>
<div class="t" style="left:368px;top:496.58px;font-size:9px;color:#a9aeb4;letter-spacing:-0.048px;">Комплектация объекта</div>
<div class="t" style="left:368px;top:510.09px;font-size:11px;color:#383d44;letter-spacing:0.075px;">Теплый пол, Умный дом</div>
<div class="t" style="left:368.1px;top:535.74px;font-size:10px;color:#80868e;letter-spacing:-0.293px;background:linear-gradient(90deg,#a9aeb3 50%,rgba(0,0,0,0) 50%) 0 100%/4px 1px repeat-x;padding-bottom:1px">Выбрать поле</div>
<div class="t" style="left:441.1px;top:535.74px;font-size:10px;color:#80868e;letter-spacing:-0.288px;background:linear-gradient(90deg,#a9aeb3 50%,rgba(0,0,0,0) 50%) 0 100%/4px 1px repeat-x;padding-bottom:1px">Создать поле</div>
<div class="t" style="right:737.3px;top:535.74px;font-size:10px;color:#80868e;letter-spacing:-0.371px;background:linear-gradient(90deg,#a9aeb3 50%,rgba(0,0,0,0) 50%) 0 100%/4px 1px repeat-x;padding-bottom:1px">Удалить раздел</div>
<div class="a" style="left:357px;top:569.8px;width:453px;height:147.80000000000007px;border-radius:10px;background:#f8fafb"></div>
<div class="t" style="left:367.7px;top:582.88px;font-size:9px;color:#535c69;font-weight:bold;transform:scaleX(0.8922);transform-origin:0 0;">ИНФОРМАЦИЯ ПО ДОГОВОРУ</div>
<div class="t" style="right:737.3px;top:582.03px;font-size:10px;color:#a8adb4;letter-spacing:-0.087px;">изменить</div>
<div class="a" style="left:368px;top:604.4px;width:431px;height:1px;background:#e8ebee"></div>
<div class="t" style="left:368px;top:618.08px;font-size:9px;color:#a9aeb4;letter-spacing:0.054px;">Номер договора</div>
<div class="t" style="left:368px;top:631.69px;font-size:11px;color:#383d44;letter-spacing:0.146px;">3/34</div>
<div class="t" style="left:368px;top:655.68px;font-size:9px;color:#a9aeb4;letter-spacing:-0.036px;">Дата договора</div>
<div class="t" style="left:368px;top:670.19px;font-size:11px;color:#383d44;letter-spacing:-0.205px;">20.01.2025</div>
<div class="t" style="left:368.1px;top:695.33px;font-size:10px;color:#80868e;letter-spacing:-0.293px;background:linear-gradient(90deg,#a9aeb3 50%,rgba(0,0,0,0) 50%) 0 100%/4px 1px repeat-x;padding-bottom:1px">Выбрать поле</div>
<div class="t" style="left:441.1px;top:695.33px;font-size:10px;color:#80868e;letter-spacing:-0.288px;background:linear-gradient(90deg,#a9aeb3 50%,rgba(0,0,0,0) 50%) 0 100%/4px 1px repeat-x;padding-bottom:1px">Создать поле</div>
<div class="t" style="right:737.3px;top:695.33px;font-size:10px;color:#80868e;letter-spacing:-0.371px;background:linear-gradient(90deg,#a9aeb3 50%,rgba(0,0,0,0) 50%) 0 100%/4px 1px repeat-x;padding-bottom:1px">Удалить раздел</div>
<div class="a" style="left:836.5px;top:121px;width:1px;height:607px;background:#dfe3e6"></div>
<div class="a" style="left:858px;top:105px;width:589.2px;height:95.6px;border-radius:10px;background:#fff"></div>
<div class="a" style="left:849px;top:121px;width:9px;height:1px;background:#dfe3e6"></div>
<div class="a" style="left:825px;top:109.5px;width:24px;height:24px;border-radius:50%;background:#2fc6f6"></div>
<svg class="a" style="left:831px;top:115.5px;" width="12" height="12" viewBox="0 0 12 12"><path d="M1 1.5h10v7H6.5L5 10.5V8.5H1z" fill="#fff"/></svg>
<div class="t" style="left:876.2px;top:120.34px;font-size:10px;color:#2e6bd6;letter-spacing:0.223px;">Дело</div>
<div class="t" style="left:916.2px;top:120.34px;font-size:10px;color:#535c69;letter-spacing:0.258px;">Комментарий</div>
<div class="t" style="left:997.3px;top:120.34px;font-size:10px;color:#535c69;letter-spacing:-0.145px;">Задача</div>
<div class="t" style="left:1045.5px;top:120.34px;font-size:10px;color:#535c69;letter-spacing:0.219px;">WhatsApp</div>
<div class="t" style="left:1108.6px;top:120.34px;font-size:10px;color:#535c69;letter-spacing:-0.091px;">СМС</div>
<div class="t" style="left:1146.6px;top:120.34px;font-size:10px;color:#535c69;letter-spacing:0.114px;">Пригласить в чат</div>
<div class="t" style="left:1243.4px;top:120.34px;font-size:10px;color:#535c69;letter-spacing:0.266px;">Письмо</div>
<div class="t" style="left:1295px;top:119.49px;font-size:11px;color:#535c69;letter-spacing:-0.153px;">Zoom</div>
<div class="t" style="left:1337.7px;top:120.34px;font-size:10px;color:#535c69;letter-spacing:-0.043px;">Визит</div>
<div class="t" style="left:1395.4px;top:120.34px;font-size:10px;color:#535c69;letter-spacing:-0.251px;">Еще</div>
<div class="t" style="left:1046.5px;top:108.54px;font-size:6.8px;color:#2fc6f6;font-weight:bold;"><span style="display:inline-block;transform:scale(0.85,0.9);transform-origin:0 100%">НОВОЕ</span></div>
<svg class="a" style="left:1420.5px;top:121.5px;" width="8" height="5" viewBox="0 0 8 5"><path d="M0.7 0.7L4 4L7.3 0.7" stroke="#6a727b" stroke-width="1.1" fill="none"/></svg>
<div class="a" style="left:866.3px;top:150.4px;width:572px;height:41.6px;border:1px solid #d5d8dc;border-radius:8px;background:#fff"></div>
<div class="t" style="left:879.5px;top:167.29px;font-size:11px;color:#80868e;letter-spacing:0.015px;">Что нужно сделать</div>
<div class="t" style="left:1373.5px;top:166.88px;font-size:9px;color:#80868e;letter-spacing:-0.139px;">действия</div>
<svg class="a" style="left:1417px;top:170px;" width="6" height="4" viewBox="0 0 6 4"><path d="M0.6 0.6L3 3L5.4 0.6" stroke="#9aa0a6" stroke-width="1" fill="none"/></svg>
<div class="a" style="left:858px;top:212px;width:589.2px;height:32px;border-radius:16px;background:#f5f7f9"></div>
<div class="a" style="left:849px;top:228.5px;width:9px;height:1px;background:#dfe3e6"></div>
<div class="a" style="left:825px;top:216.5px;width:24px;height:24px;border-radius:50%;background:#9dcf00"></div>
<svg class="a" style="left:831px;top:222.5px;" width="12" height="12" viewBox="0 0 12 12"><path d="M1.5 1.5h9v7H6L4.5 10.3V8.5H1.5z" fill="none" stroke="#fff" stroke-width="1.5" stroke-linejoin="round"/></svg>
<div class="a" style="left:864.5px;top:219.5px;width:17px;height:17px;border-radius:50%;background:#7d858e;overflow:hidden"><div class="a" style="left:5.5px;top:3.5px;width:5.5px;height:6px;border-radius:50%;background:#f5f7f9"></div><div class="a" style="left:3px;top:9.5px;width:10.5px;height:6px;border-radius:5px 5px 0 0;background:#f5f7f9"></div></div>
<div class="a" style="left:875px;top:219.5px;width:17px;height:17px;border-radius:50%;background:#fff"></div>
<svg class="a" style="left:878.5px;top:223px;" width="10" height="10" viewBox="0 0 10 10"><path d="M5 0.5V9.5M0.5 5H9.5" stroke="#2fc6f6" stroke-width="1.6"/></svg>
<div class="t" style="left:897.9px;top:224.34px;font-size:10px;color:#80868e;letter-spacing:0.243px;">Пригласить к обсуждению</div>
<div class="a" style="left:837px;top:263px;width:610px;height:1px;background:#dfe3e6"></div>
<div class="a" style="left:1100.6px;top:255.3px;width:103.4px;height:16.2px;border-radius:8px;background:#9dcf00"></div>
<div class="t" style="left:1112.4px;top:259.48px;font-size:9px;color:#fff;font-weight:bold;transform:scaleX(0.9411);transform-origin:0 0;">Что нужно сделать</div>
<div class="a" style="left:825px;top:287.5px;width:24px;height:24px;border-radius:50%;background:#9dcf00"></div>
<svg class="a" style="left:833px;top:292.5px;" width="8" height="14" viewBox="0 0 8 14"><circle cx="4" cy="2" r="1.9" fill="#fff"/><path d="M1 5.5H5V11.5H7V13H1V11.5H3V7H1Z" fill="#fff"/></svg>
<div class="a" style="left:849px;top:299px;width:9px;height:1px;background:#dfe3e6"></div>
<div class="a" style="left:858px;top:283px;width:589.2px;height:42.7px;border-radius:10px;background:#fefef0"></div>
<div class="a" style="left:869.6px;top:295.6px;width:16.8px;height:16.8px;border-radius:50%;background:#9dcf00"></div>
<svg class="a" style="left:872.5px;top:298.5px;" width="11" height="11" viewBox="0 0 11 11"><path d="M5.5 1V10M1 5.5H10" stroke="#fff" stroke-width="1.7"/></svg>
<div class="t" style="left:895.2px;top:292.49px;font-size:11px;color:#454b53;letter-spacing:-0.149px;">Создайте дело</div>
<div class="t" style="left:895.2px;top:307.74px;font-size:10px;color:#a9aeb4;letter-spacing:-0.187px;">Запланируйте следующий шаг, чтобы не забыть о важном</div>
<div class="a" style="left:837px;top:344.5px;width:549px;height:1px;background:#dfe3e6"></div>
<div class="a" style="left:1124px;top:337.2px;width:56.6px;height:16.8px;border-radius:8.5px;background:#2fc6f6"></div>
<div class="t" style="left:1135px;top:341.38px;font-size:9px;color:#fff;font-weight:bold;transform:scaleX(0.9289);transform-origin:0 0;">Сегодня</div>
<div class="a" style="left:1386.4px;top:337px;width:60.4px;height:16.5px;border-radius:8px;background:#f8f9fa"></div>
<svg class="a" style="left:1394px;top:340.5px;" width="8" height="8" viewBox="0 0 8 8"><path d="M0.3 0.5H7.7L4.8 4V7.5L3.2 6.5V4Z" fill="#a8adb4"/></svg>
<div class="t" style="left:1406.5px;top:342.83px;font-size:8px;color:#a9aeb4;transform:scaleX(0.9125);transform-origin:0 0;">ФИЛЬТР</div>
<div class="a" style="left:858px;top:365.0px;width:589.2px;height:54px;border-radius:10px;background:#fff"></div>
<div class="a" style="left:849px;top:381.0px;width:9px;height:1px;background:#dfe3e6"></div>
<div class="a" style="left:825px;top:369.3px;width:24px;height:24px;border-radius:50%;background:#fff"></div>
<svg class="a" style="left:831px;top:375.3px;" width="12" height="12" viewBox="0 0 12 12"><path d="M6 11V1.5M1.5 6L6 1.5L10.5 6" stroke="#a8adb4" stroke-width="1.5" fill="none"/></svg>
<div class="t" style="left:869.8px;top:376.54px;font-size:10px;color:#a3a8ae;letter-spacing:0.077px;-webkit-text-stroke:0.25px #a3a8ae">Сделка завершена</div>
<div class="a" style="left:965.7px;top:374.6px;width:74.1px;height:15.1px;border-radius:8px;background:#e1f1b5"></div>
<div class="t" style="left:972.2px;top:379.67px;font-size:7px;color:#6a8a0f;font-weight:bold;transform:scaleX(0.8971);transform-origin:0 0;">СДЕЛКА УСПЕШНА</div>
<div class="t" style="left:1046.9px;top:377.58px;font-size:9px;color:#b9bdc1;letter-spacing:0.115px;">16:09</div>
<div class="t" style="left:869.8px;top:397.74px;font-size:10px;color:#959ba1;letter-spacing:-0.583px;">Сделка</div>
<div class="t" style="left:903.8px;top:397.74px;font-size:10px;color:#2f6eb6;letter-spacing:0.186px;">Сделка по договору №3/34 от 20.01.2025</div>
<div class="a" style="left:1421.8px;top:371.6px;width:15.2px;height:15.2px;border-radius:50%;background:#babfc4;overflow:hidden"><div class="a" style="left:5.1px;top:3px;width:5px;height:5.5px;border-radius:50%;background:#fff"></div><div class="a" style="left:3.6px;top:8.2px;width:8px;height:4.2px;border-radius:4px 4px 0 0;background:#fff"></div></div>
<div class="a" style="left:858px;top:430.5px;width:589.2px;height:54px;border-radius:10px;background:#fff"></div>
<div class="a" style="left:849px;top:446.5px;width:9px;height:1px;background:#dfe3e6"></div>
<div class="a" style="left:825px;top:434.8px;width:24px;height:24px;border-radius:50%;background:#fff"></div>
<svg class="a" style="left:831px;top:440.8px;" width="12" height="12" viewBox="0 0 12 12"><path d="M6 1V10.5M1.5 6L6 10.5L10.5 6" stroke="#a8adb4" stroke-width="1.5" fill="none"/></svg>
<div class="t" style="left:869.8px;top:442.04px;font-size:10px;color:#a3a8ae;letter-spacing:0.077px;-webkit-text-stroke:0.25px #a3a8ae">Сделка завершена</div>
<div class="a" style="left:965.7px;top:440.1px;width:107px;height:15.1px;border-radius:8px;background:#fde5e5"></div>
<div class="t" style="left:972.2px;top:445.17px;font-size:7px;color:#c8303a;font-weight:bold;transform:scaleX(0.9314);transform-origin:0 0;">НЕ ПОДОШЛО ПО БЮДЖЕТУ</div>
<div class="t" style="left:1080px;top:443.08px;font-size:9px;color:#b9bdc1;letter-spacing:0.115px;">16:09</div>
<div class="t" style="left:869.8px;top:463.24px;font-size:10px;color:#959ba1;letter-spacing:-0.583px;">Сделка</div>
<div class="t" style="left:903.8px;top:463.24px;font-size:10px;color:#2f6eb6;letter-spacing:0.186px;">Сделка по договору №3/34 от 20.01.2025</div>
<div class="a" style="left:1421.8px;top:437.1px;width:15.2px;height:15.2px;border-radius:50%;background:#babfc4;overflow:hidden"><div class="a" style="left:5.1px;top:3px;width:5px;height:5.5px;border-radius:50%;background:#fff"></div><div class="a" style="left:3.6px;top:8.2px;width:8px;height:4.2px;border-radius:4px 4px 0 0;background:#fff"></div></div>
<div class="a" style="left:858px;top:496.0px;width:589.2px;height:54px;border-radius:10px;background:#fff"></div>
<div class="a" style="left:849px;top:512.0px;width:9px;height:1px;background:#dfe3e6"></div>
<div class="a" style="left:825px;top:500.3px;width:24px;height:24px;border-radius:50%;background:#fff"></div>
<svg class="a" style="left:831px;top:506.3px;" width="12" height="12" viewBox="0 0 12 12"><path d="M6 11V1.5M1.5 6L6 1.5L10.5 6" stroke="#a8adb4" stroke-width="1.5" fill="none"/></svg>
<div class="t" style="left:869.8px;top:507.54px;font-size:10px;color:#a3a8ae;letter-spacing:0.077px;-webkit-text-stroke:0.25px #a3a8ae">Сделка завершена</div>
<div class="a" style="left:965.7px;top:505.6px;width:74.1px;height:15.1px;border-radius:8px;background:#e1f1b5"></div>
<div class="t" style="left:972.2px;top:510.67px;font-size:7px;color:#6a8a0f;font-weight:bold;transform:scaleX(0.8971);transform-origin:0 0;">СДЕЛКА УСПЕШНА</div>
<div class="t" style="left:1046.9px;top:508.58px;font-size:9px;color:#b9bdc1;letter-spacing:0.115px;">16:08</div>
<div class="t" style="left:869.8px;top:528.73px;font-size:10px;color:#959ba1;letter-spacing:-0.583px;">Сделка</div>
<div class="t" style="left:903.8px;top:528.73px;font-size:10px;color:#2f6eb6;letter-spacing:0.186px;">Сделка по договору №3/34 от 20.01.2025</div>
<div class="a" style="left:1421.8px;top:502.6px;width:15.2px;height:15.2px;border-radius:50%;background:#babfc4;overflow:hidden"><div class="a" style="left:5.1px;top:3px;width:5px;height:5.5px;border-radius:50%;background:#fff"></div><div class="a" style="left:3.6px;top:8.2px;width:8px;height:4.2px;border-radius:4px 4px 0 0;background:#fff"></div></div>
<div class="a" style="left:858px;top:561.5px;width:589.2px;height:54px;border-radius:10px;background:#fff"></div>
<div class="a" style="left:849px;top:577.5px;width:9px;height:1px;background:#dfe3e6"></div>
<div class="a" style="left:825px;top:565.8px;width:24px;height:24px;border-radius:50%;background:#fff"></div>
<svg class="a" style="left:831px;top:571.8px;" width="12" height="12" viewBox="0 0 12 12"><path d="M6 1V10.5M1.5 6L6 10.5L10.5 6" stroke="#a8adb4" stroke-width="1.5" fill="none"/></svg>
<div class="t" style="left:869.8px;top:573.03px;font-size:10px;color:#a3a8ae;letter-spacing:0.077px;-webkit-text-stroke:0.25px #a3a8ae">Сделка завершена</div>
<div class="a" style="left:965.7px;top:571.1px;width:107px;height:15.1px;border-radius:8px;background:#fde5e5"></div>
<div class="t" style="left:972.2px;top:576.17px;font-size:7px;color:#c8303a;font-weight:bold;transform:scaleX(0.9314);transform-origin:0 0;">НЕ ПОДОШЛО ПО БЮДЖЕТУ</div>
<div class="t" style="left:1080px;top:574.08px;font-size:9px;color:#b9bdc1;letter-spacing:0.115px;">16:08</div>
<div class="t" style="left:869.8px;top:594.23px;font-size:10px;color:#959ba1;letter-spacing:-0.583px;">Сделка</div>
<div class="t" style="left:903.8px;top:594.23px;font-size:10px;color:#2f6eb6;letter-spacing:0.186px;">Сделка по договору №3/34 от 20.01.2025</div>
<div class="a" style="left:1421.8px;top:568.1px;width:15.2px;height:15.2px;border-radius:50%;background:#babfc4;overflow:hidden"><div class="a" style="left:5.1px;top:3px;width:5px;height:5.5px;border-radius:50%;background:#fff"></div><div class="a" style="left:3.6px;top:8.2px;width:8px;height:4.2px;border-radius:4px 4px 0 0;background:#fff"></div></div>
<div class="a" style="left:858px;top:627.0px;width:589.2px;height:54px;border-radius:10px;background:#fff"></div>
<div class="a" style="left:849px;top:643.0px;width:9px;height:1px;background:#dfe3e6"></div>
<div class="a" style="left:825px;top:631.3px;width:24px;height:24px;border-radius:50%;background:#fff"></div>
<svg class="a" style="left:831px;top:637.3px;" width="12" height="12" viewBox="0 0 12 12"><path d="M6 11V1.5M1.5 6L6 1.5L10.5 6" stroke="#a8adb4" stroke-width="1.5" fill="none"/></svg>
<div class="t" style="left:869.8px;top:638.53px;font-size:10px;color:#a3a8ae;letter-spacing:0.077px;-webkit-text-stroke:0.25px #a3a8ae">Сделка завершена</div>
<div class="a" style="left:965.7px;top:636.6px;width:74.1px;height:15.1px;border-radius:8px;background:#e1f1b5"></div>
<div class="t" style="left:972.2px;top:641.67px;font-size:7px;color:#6a8a0f;font-weight:bold;transform:scaleX(0.8971);transform-origin:0 0;">СДЕЛКА УСПЕШНА</div>
<div class="t" style="left:1046.9px;top:639.58px;font-size:9px;color:#b9bdc1;letter-spacing:0.115px;">15:55</div>
<div class="t" style="left:869.8px;top:659.73px;font-size:10px;color:#959ba1;letter-spacing:-0.583px;">Сделка</div>
<div class="t" style="left:903.8px;top:659.73px;font-size:10px;color:#2f6eb6;letter-spacing:0.186px;">Сделка по договору №3/34 от 20.01.2025</div>
<div class="a" style="left:1421.8px;top:633.6px;width:15.2px;height:15.2px;border-radius:50%;background:#babfc4;overflow:hidden"><div class="a" style="left:5.1px;top:3px;width:5px;height:5.5px;border-radius:50%;background:#fff"></div><div class="a" style="left:3.6px;top:8.2px;width:8px;height:4.2px;border-radius:4px 4px 0 0;background:#fff"></div></div>
<div class="a" style="left:858px;top:692.5px;width:589.2px;height:60px;border-radius:10px;background:#fff"></div>
<div class="a" style="left:849px;top:708.5px;width:9px;height:1px;background:#dfe3e6"></div>
<div class="a" style="left:825px;top:697.3px;width:24px;height:24px;border-radius:50%;background:#fff"></div>
<svg class="a" style="left:833px;top:702.5px;" width="8" height="14" viewBox="0 0 8 14"><circle cx="4" cy="2" r="1.9" fill="#a8adb4"/><path d="M1 5.5H5V11.5H7V13H1V11.5H3V7H1Z" fill="#a8adb4"/></svg>
<div class="t" style="left:869.8px;top:704.03px;font-size:10px;color:#a3a8ae;letter-spacing:0.138px;-webkit-text-stroke:0.25px #a3a8ae">Создан контакт</div>
<div class="t" style="left:952px;top:705.08px;font-size:9px;color:#b9bdc1;letter-spacing:0.115px;">15:53</div>
<div class="t" style="left:869.8px;top:724.39px;font-size:11px;color:#383d44;letter-spacing:-0.170px;">Олег</div>
<div class="a" style="left:1421.8px;top:699.1px;width:15.2px;height:15.2px;border-radius:50%;background:#babfc4;overflow:hidden"><div class="a" style="left:5.1px;top:3px;width:5px;height:5.5px;border-radius:50%;background:#fff"></div><div class="a" style="left:3.6px;top:8.2px;width:8px;height:4.2px;border-radius:4px 4px 0 0;background:#fff"></div></div>
<div class="a" style="left:1460px;top:0px;width:14px;height:728px;background:#f1f1f1"></div>
<div class="a" style="left:1460px;top:17px;width:14px;height:526px;background:#c1c1c1"></div>
<svg class="a" style="left:1463px;top:5px;" width="8" height="5" viewBox="0 0 8 5"><path d="M0 4.5H8L4 0.5Z" fill="#a3a3a3"/></svg>
<svg class="a" style="left:1463px;top:716px;" width="8" height="5" viewBox="0 0 8 5"><path d="M0 0.5H8L4 4.5Z" fill="#505050"/></svg>
<div class="a" style="left:1474px;top:0px;width:62px;height:728px;background:#eef2f4;border-left:1px solid #e3e7ea"></div>
<div class="a" style="left:1474px;top:0px;width:62px;height:1px;background:#c5c9cc"></div>
<div class="a" style="left:1487.4px;top:11.5px;width:23.6px;height:23.5px;border-radius:4px;background:#dfe3e6"></div>
<div class="a" style="left:1494px;top:18.3px;width:11.5px;height:11.5px;border-radius:50%;background:#535c69"></div>
<div class="t" style="left:1496.8px;top:21.18px;font-size:9px;color:#fff;font-weight:bold;">?</div>
<div class="a" style="left:1504px;top:7.5px;width:12px;height:12px;border-radius:50%;background:#f4433c;border:1px solid #eef2f4"></div>
<div class="t" style="left:1508.2px;top:11.03px;font-size:8px;color:#fff;font-weight:bold;">1</div>
<div class="a" style="left:1483px;top:47.5px;width:33px;height:1px;background:#dfe3e6"></div>
<div class="a" style="left:1487.5px;top:59px;width:25px;height:25px;border-radius:50%;background:#dfe3e6"></div>
<svg class="a" style="left:1493px;top:64.5px;" width="14" height="14" viewBox="0 0 14 14"><path d="M12.3 8.8A5.8 5.8 0 1 1 11 3" stroke="#535c69" stroke-width="1.4" fill="none"/><circle cx="7" cy="7" r="3.3" stroke="#535c69" stroke-width="1.4" fill="none"/><circle cx="8" cy="6" r="1.3" fill="#535c69"/></svg>
<div class="a" style="left:1487.5px;top:93px;width:25px;height:25px;border-radius:50%;background:#dfe3e6"></div>
<svg class="a" style="left:1494px;top:98.5px;" width="12" height="13" viewBox="0 0 12 13"><path d="M6 1C3.5 1 2.5 3 2.5 5V8L1 10H11L9.5 8V5C9.5 3 8.5 1 6 1Z" fill="#535c69"/><rect x="4.8" y="10.8" width="2.4" height="1.6" rx="0.8" fill="#535c69"/></svg>
<div class="a" style="left:1487.5px;top:128px;width:25px;height:25px;border-radius:50%;background:#dfe3e6"></div>
<svg class="a" style="left:1493.5px;top:133.5px;" width="14" height="14" viewBox="0 0 14 14"><path d="M7 1.2A5.8 5.8 0 1 0 12.2 9.5L13 12.8L9.8 12A5.8 5.8 0 0 0 7 1.2Z" stroke="#535c69" stroke-width="1.3" fill="none"/><path d="M4.3 4.8h5.2M4.3 7h5.2M4.3 9.2h5.2" stroke="#535c69" stroke-width="0.9"/><path d="M8.3 3.9l1.2 0.9-1.2 0.9M5.5 8.3l-1.2 0.9 1.2 0.9" stroke="#535c69" stroke-width="0.8" fill="none"/></svg>
<div class="a" style="left:1483px;top:164px;width:33px;height:1px;background:#dfe3e6"></div>
<svg class="a" style="left:1494px;top:172.5px;" width="12" height="12" viewBox="0 0 12 12"><circle cx="4.8" cy="4.8" r="3.8" stroke="#535c69" stroke-width="1.5" fill="none"/><path d="M7.5 7.5L11 11" stroke="#535c69" stroke-width="1.7"/></svg>
<div class="a" style="left:1483px;top:192px;width:33px;height:1px;background:#dfe3e6"></div>
<div class="a" style="left:1488px;top:204px;width:24px;height:24px;border-radius:50%;background:linear-gradient(160deg,#93e07e,#3fd9c8)"></div>
<svg class="a" style="left:1492.5px;top:208.5px;" width="15" height="15" viewBox="0 0 15 15"><rect x="2" y="2.5" width="9" height="10" rx="1" fill="#fff" opacity="0.85"/><rect x="11.5" y="5" width="1.8" height="7.5" fill="#fff" opacity="0.85"/><circle cx="4" cy="4.5" r="1" fill="#3cc6e6"/><path d="M5.5 4.5h4M3.5 7h6M3.5 9h6" stroke="#7ad9b8" stroke-width="0.8"/></svg>
<svg class="a" style="left:1488px;top:238.5px;" width="24" height="24" viewBox="0 0 24 24"><circle cx="12" cy="12" r="11.5" fill="#f7f7fa" stroke="#e2e5e9" stroke-width="0.8"/><path d="M5 13C3.5 7 6.5 3 12 3S20.5 7 19 13L20.5 17H15V12H9V17H3.5Z" fill="#e0ad55"/><ellipse cx="12.3" cy="11" rx="3.6" ry="4.3" fill="#f6d2b8"/><path d="M6 24C6 18.5 8.5 16.5 12 16.5S18 18.5 18 24Z" fill="#6d6fb8"/><path d="M10.5 16.8L12 21L13.5 16.8Z" fill="#fff"/><path d="M8.5 8C10 5.5 15 5.5 16 9.5C14 7.5 11 7.5 8.5 8Z" fill="#c99040"/></svg>
<div class="a" style="left:1488px;top:272.5px;width:24px;height:24px;border-radius:50%;background:#e98a74"></div>
<div class="t" style="left:1492.8px;top:281.34px;font-size:10px;color:#fff;font-weight:bold;letter-spacing:-0.289px;">AK</div>
</body></html>
